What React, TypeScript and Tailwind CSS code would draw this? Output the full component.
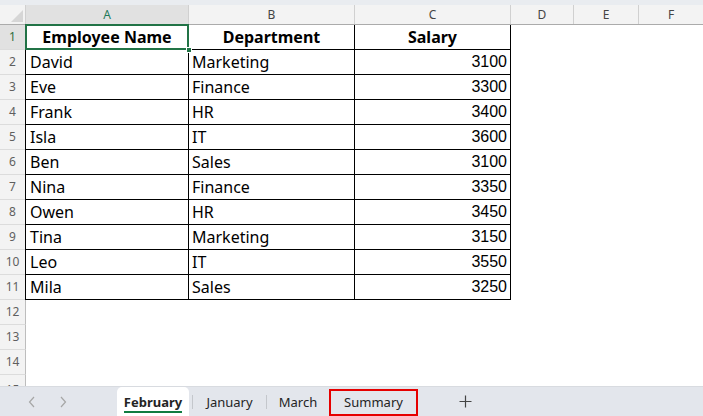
import React from "react";

const rows: [string, string, number][] = [
  ["David", "Marketing", 3100],
  ["Eve", "Finance", 3300],
  ["Frank", "HR", 3400],
  ["Isla", "IT", 3600],
  ["Ben", "Sales", 3100],
  ["Nina", "Finance", 3350],
  ["Owen", "HR", 3450],
  ["Tina", "Marketing", 3150],
  ["Leo", "IT", 3550],
  ["Mila", "Sales", 3250],
];

const cellFont = { fontFamily: '"Noto Sans", "Open Sans", sans-serif' };
const numFont = { fontFamily: '"Liberation Sans", Arial, sans-serif' };
const uiFont = { fontFamily: '"Noto Sans", "Open Sans", sans-serif' };

function RowHead({ n, sel }: { n: number; sel?: boolean }) {
  return (
    <div
      className={`w-[26px] shrink-0 h-full flex items-center justify-center border-r border-[#bdbdbd] border-b border-b-[#dcdcdc] text-[12px] ${
        sel ? "bg-[#e1e1e1] text-[#2f6f3e]" : "bg-[#f3f3f3] text-[#5f5f5f]"
      }`}
      style={uiFont}
    >
      {n}
    </div>
  );
}

export default function App() {
  return (
    <div className="w-[703px] h-[416px] flex flex-col bg-white overflow-hidden">
      <div className="h-[5px] bg-[#e9ecf0] shrink-0" />
      {/* column headers */}
      <div className="h-[20px] shrink-0 flex bg-[#f3f3f3] border-b border-[#ababab] text-[12px] text-[#444]" style={uiFont}>
        <div className="w-[26px] shrink-0 relative border-r border-[#d0d0d0]">
          <div className="absolute right-[2px] bottom-[2px] w-0 h-0 border-l-[12px] border-l-transparent border-b-[12px] border-b-[#d6d6d6]" />
        </div>
        <div className="w-[163px] shrink-0 flex items-center justify-center bg-[#e1e1e1] text-[#1f7a5a] border-r border-[#d0d0d0]">A</div>
        <div className="w-[166px] shrink-0 flex items-center justify-center border-r border-[#d0d0d0]">B</div>
        <div className="w-[156px] shrink-0 flex items-center justify-center border-r border-[#d0d0d0]">C</div>
        <div className="w-[63px] shrink-0 flex items-center justify-center border-r border-[#d0d0d0]">D</div>
        <div className="w-[65px] shrink-0 flex items-center justify-center border-r border-[#d0d0d0]">E</div>
        <div className="flex-1 flex items-center justify-center">F</div>
      </div>

      {/* header row 1 */}
      <div className="h-[25px] shrink-0 flex">
        <RowHead n={1} sel />
        <div className="w-[163px] shrink-0 relative border-b border-r border-black flex items-center justify-center font-bold text-[16px] text-black" style={cellFont}>
          Employee Name
          <div className="absolute left-[-1px] top-[-1px] right-[-1px] bottom-[-1px] border-2 border-[#217346]" />
          <div className="absolute right-[-4px] bottom-[-4px] w-[6px] h-[6px] bg-[#217346] border border-white" />
        </div>
        <div className="w-[166px] shrink-0 border-b border-r border-black flex items-center justify-center font-bold text-[16px] text-black" style={cellFont}>
          Department
        </div>
        <div className="w-[156px] shrink-0 border-b border-r border-black flex items-center justify-center font-bold text-[16px] text-black" style={cellFont}>
          Salary
        </div>
        <div className="flex-1" />
      </div>

      {rows.map(([name, dept, sal], i) => (
        <div key={i} className="h-[25px] shrink-0 flex">
          <RowHead n={i + 2} />
          <div className="w-[164px] -ml-px shrink-0 border-l border-b border-r border-black flex items-center pl-[4px] text-[16px] text-black" style={cellFont}>
            {name}
          </div>
          <div className="w-[166px] shrink-0 border-b border-r border-black flex items-center pl-[3px] text-[16px] text-black" style={cellFont}>
            {dept}
          </div>
          <div className="w-[156px] shrink-0 border-b border-r border-black flex items-center justify-end pr-[3px] text-[16px] text-black" style={numFont}>
            {sal}
          </div>
          <div className="flex-1" />
        </div>
      ))}

      {[12, 13, 14].map((n) => (
        <div key={n} className="h-[25px] shrink-0 flex">
          <RowHead n={n} />
          <div className="flex-1" />
        </div>
      ))}
      <div className="flex-1 flex overflow-hidden">
        <div className="w-[26px] shrink-0 bg-[#f3f3f3] border-r border-[#bdbdbd] flex justify-center pt-[6px] text-[12px] text-[#5f5f5f]" style={uiFont}>
          15
        </div>
        <div className="flex-1" />
      </div>

      {/* sheet tabs */}
      <div className="h-[30px] shrink-0 flex items-stretch bg-[#e3e6ec] border-t border-[#d8dbe0] text-[13px] text-[#242424]" style={uiFont}>
        <div className="w-[117px] shrink-0 flex items-center pl-[27px] gap-[21px] text-[#a6a6a6]">
          <svg width="10" height="14" viewBox="0 0 10 14" fill="none" stroke="currentColor" strokeWidth="1.2">
            <path d="M7 2 L2.5 7 L7 12" />
          </svg>
          <svg width="10" height="14" viewBox="0 0 10 14" fill="none" stroke="currentColor" strokeWidth="1.2">
            <path d="M3 2 L7.5 7 L3 12" />
          </svg>
        </div>
        <div className="w-[72px] shrink-0 bg-white rounded-t-[5px] flex flex-col items-center justify-center font-bold">
          <span className="leading-[18px] pt-[2px] border-b-2 border-[#107c41]">February</span>
        </div>
        <div className="w-px h-[14px] self-center bg-[#c4c7cc] ml-[3px]" />
        <div className="w-[73px] shrink-0 flex items-center justify-center pt-[2px]">January</div>
        <div className="w-px h-[14px] self-center bg-[#c4c7cc]" />
        <div className="w-[62px] shrink-0 flex items-center justify-center pt-[2px]">March</div>
        <div className="w-[89px] shrink-0 flex items-center justify-center border-2 border-[#e60000] mt-[2px] pt-[1px]">Summary</div>
        <div className="w-[94px] shrink-0 flex items-center justify-center text-[#444]">
          <svg width="13" height="13" viewBox="0 0 13 13" stroke="currentColor" strokeWidth="1.2">
            <path d="M6.5 0.5 V12.5 M0.5 6.5 H12.5" />
          </svg>
        </div>
        <div className="flex-1" />
      </div>
    </div>
  );
}
